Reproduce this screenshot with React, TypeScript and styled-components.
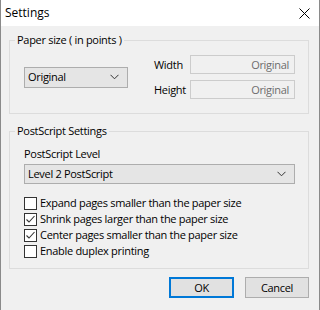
import React from "react"
import styled, { createGlobalStyle } from "styled-components"

const GlobalStyle = createGlobalStyle`
  html, body {
    margin: 0;
    padding: 0;
    background: #ffffff;
  }
  body {
    font-family: "Segoe UI", "Open Sans", "Noto Sans", sans-serif;
    font-size: 11px;
    letter-spacing: -0.3px;
    color: #000;
  }
`

const checks = [
  { label: "Expand pages smaller than the paper size", checked: false },
  { label: "Shrink pages larger than the paper size", checked: true },
  { label: "Center pages smaller than the paper size", checked: true },
  { label: "Enable duplex printing", checked: false },
]

const Chevron = () => (
  <svg width="9" height="6" viewBox="0 0 9 6">
    <path d="M0.5 0.8 L4.5 4.8 L8.5 0.8" fill="none" stroke="#333" strokeWidth="1" />
  </svg>
)

const CheckMark = () => (
  <svg width="11" height="11" viewBox="0 0 11 11">
    <path d="M1.5 5.5 L4 8 L9.5 2" fill="none" stroke="#333" strokeWidth="1.1" />
  </svg>
)

export default function App() {
  return (
    <Window>
      <GlobalStyle />
      <TitleBar>
        <Title>Settings</Title>
        <CloseButton aria-label="Close">
          <svg width="11" height="11" viewBox="0 0 11 11">
            <path d="M0.5 0.5 L10.5 10.5 M10.5 0.5 L0.5 10.5" stroke="#000" strokeWidth="1" />
          </svg>
        </CloseButton>
      </TitleBar>

      <Body>
        <Group>
          <Legend>Paper size ( in points )</Legend>
          <PaperRow>
            <Select width={104} height={21}>
              <span>Original</span>
              <Chevron />
            </Select>
            <SizeGrid>
              <FieldLabel>Width</FieldLabel>
              <ReadOnlyInput>Original</ReadOnlyInput>
              <FieldLabel>Height</FieldLabel>
              <ReadOnlyInput>Original</ReadOnlyInput>
            </SizeGrid>
          </PaperRow>
        </Group>

        <Group spaced>
          <Legend>PostScript Settings</Legend>
          <LevelLabel>PostScript Level</LevelLabel>
          <Select height={20}>
            <span>Level 2 PostScript</span>
            <Chevron />
          </Select>
          <CheckList>
            {checks.map(c => (
              <CheckRow key={c.label}>
                <Box>{c.checked && <CheckMark />}</Box>
                <span>{c.label}</span>
              </CheckRow>
            ))}
          </CheckList>
        </Group>

        <ButtonRow>
          <Button primary>OK</Button>
          <Button width={64}>Cancel</Button>
        </ButtonRow>
      </Body>
    </Window>
  )
}

const Window = styled.div`
  width: 320px;
  height: 310px;
  box-sizing: border-box;
  background: #f0f0f0;
  border-left: 1px solid #8a8a8a;
  border-right: 1px solid #8a8a8a;
  display: flex;
  flex-direction: column;
  overflow: hidden;
`

const TitleBar = styled.div`
  height: 26px;
  flex: none;
  background: #ffffff;
  display: flex;
  align-items: center;
  justify-content: space-between;
  padding: 0 9px 0 4px;
`

const Title = styled.div`
  font-size: 12px;
  letter-spacing: 0;
  line-height: 16px;
`

const CloseButton = styled.div`
  width: 11px;
  height: 11px;
  display: flex;
`

const Body = styled.div`
  padding: 6px 10px 0 8px;
  display: flex;
  flex-direction: column;
`

const Group = styled.fieldset<{ spaced?: boolean }>`
  margin: ${p => (p.spaced ? "9px" : "0")} 0 0 0;
  border: 1px solid #dcdcdc;
  padding: 0 13px ${p => (p.spaced ? "9px" : "14px")} 14px;
  display: flex;
  flex-direction: column;
  min-width: 0;
`

const Legend = styled.legend`
  line-height: 16px;
  padding: 0 2px;
  margin-left: -9px;
`

const PaperRow = styled.div`
  display: flex;
  align-items: center;
  justify-content: space-between;
  padding-top: 7px;
`

const Select = styled.div<{ width?: number; height: number }>`
  box-sizing: border-box;
  width: ${p => (p.width ? `${p.width}px` : "100%")};
  height: ${p => p.height}px;
  background: #e5e5e5;
  border: 1px solid #adadad;
  display: flex;
  align-items: center;
  justify-content: space-between;
  padding: 0 8px 0 3px;
  line-height: 16px;
`

const SizeGrid = styled.div`
  display: grid;
  grid-template-columns: 36px 105px;
  row-gap: 6px;
  align-items: center;
`

const FieldLabel = styled.div`
  line-height: 16px;
`

const ReadOnlyInput = styled.div`
  box-sizing: border-box;
  height: 19px;
  background: #f0f0f0;
  border: 1px solid #cccccc;
  color: #6d6d6d;
  text-align: right;
  padding: 0 5px;
  line-height: 17px;
`

const LevelLabel = styled.div`
  line-height: 16px;
  padding-top: 7px;
  margin-bottom: 2px;
`

const CheckList = styled.div`
  display: flex;
  flex-direction: column;
  margin-top: 11px;
`

const CheckRow = styled.div`
  height: 16px;
  display: flex;
  align-items: center;
  gap: 3px;
  line-height: 16px;
`

const Box = styled.div`
  box-sizing: border-box;
  width: 13px;
  height: 13px;
  border: 1px solid #333333;
  background: #ffffff;
  display: flex;
  align-items: center;
  justify-content: center;
`

const ButtonRow = styled.div`
  display: flex;
  justify-content: flex-end;
  gap: 11px;
  margin-top: 8px;
`

const Button = styled.div<{ primary?: boolean; width?: number }>`
  box-sizing: border-box;
  width: ${p => p.width ?? 65}px;
  height: 21px;
  background: #e1e1e1;
  border: ${p => (p.primary ? "2px solid #0078d7" : "1px solid #adadad")};
  display: flex;
  align-items: center;
  justify-content: center;
`
